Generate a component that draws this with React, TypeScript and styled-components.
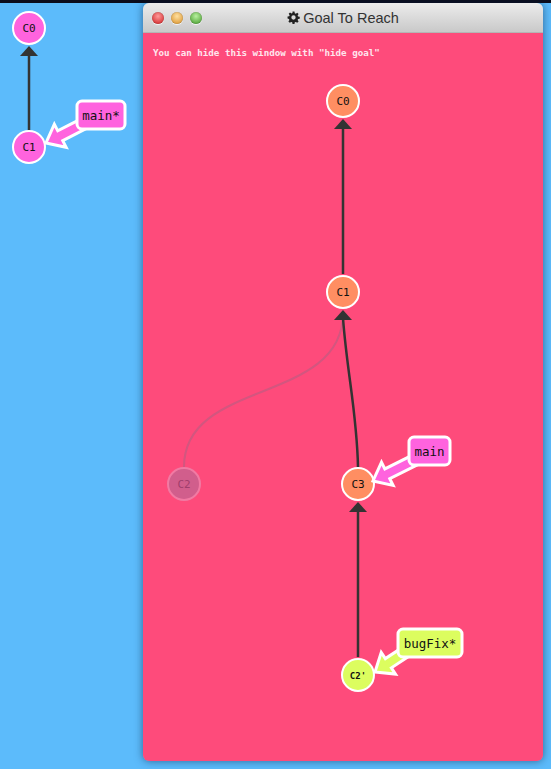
import styled, { createGlobalStyle } from 'styled-components';

const GlobalStyle = createGlobalStyle`
    html, body {
        margin: 0;
        padding: 0;
        background: #5cbbfb;
        overflow: hidden;
    }
`;

const Page = styled.div`
    width: 551px;
    height: 769px;
    background: #5cbbfb;
    border-top: 3px solid #0b0d1c;
    box-sizing: border-box;
    display: flex;
    align-items: flex-start;
`;
const LeftCanvas = styled.svg`
    width: 143px;
    height: 300px;
    flex: none;
`;
const Window = styled.div`
    width: 400px;
    height: 758px;
    border-radius: 6px;
    overflow: hidden;
    display: flex;
    flex-direction: column;
    box-shadow: 0 0 9px rgba(10, 30, 60, 0.55);
`;
const TitleBar = styled.div`
    height: 30px;
    flex: none;
    display: flex;
    align-items: center;
    justify-content: center;
    position: relative;
    background: linear-gradient(#ececec, #c9c9c9);
    border-bottom: 1px solid #b5b5b5;
    box-sizing: border-box;
`;
const Lights = styled.div`
    position: absolute;
    left: 9px;
    top: 9px;
    display: flex;
    gap: 7px;
`;
const Light = styled.span<{ $c: string; $d: string }>`
    width: 12px;
    height: 12px;
    border-radius: 50%;
    background: radial-gradient(circle at 50% 35%, ${p => p.$c} 0%, ${p => p.$d} 75%);
    box-shadow: 0 1px 1px rgba(255, 255, 255, 0.8), inset 0 0 1px rgba(0, 0, 0, 0.4);
`;
const Title = styled.div`
    font-family: 'Liberation Sans', Arial, sans-serif;
    font-size: 14.5px;
    color: #333;
    display: flex;
    align-items: center;
    gap: 3px;
`;
const Body = styled.div`
    flex: 1;
    background: #fe4b7b;
    display: flex;
    flex-direction: column;
`;
const Hint = styled.div`
    height: 26px;
    box-sizing: border-box;
    padding: 14px 10px 0;
    font-family: 'DejaVu Sans Mono', monospace;
    font-size: 9.2px;
    font-weight: bold;
    line-height: 12px;
    color: #ffe6ee;
    white-space: pre;
`;
const Graph = styled.svg`
    width: 400px;
    flex: 1;
`;

const ORANGE = '#ff8e62';
const PINK = '#ff63de';
const LIME = '#dcfd5f';
const EDGE = '#333';

function Node({ x, y, label, fill, small, faded }: {
    x: number; y: number; label: string; fill: string; small?: boolean; faded?: boolean;
}) {
    return (
        <g>
            <circle cx={x} cy={y} r={16} fill={faded ? '#d15e8c' : fill} stroke={faded ? '#f17aa3' : '#fff'} strokeWidth={2} />
            <text
                x={x}
                y={y + (small ? 3.5 : 4)}
                textAnchor="middle"
                fontFamily="'DejaVu Sans Mono', monospace"
                fontSize={small ? 9 : 11}
                fontWeight={small ? 'bold' : 'normal'}
                fill={faded ? '#a03e6c' : '#111'}
            >
                {label}
            </text>
        </g>
    );
}

function Head({ x, y }: { x: number; y: number }) {
    // arrowhead under a parent node, pointing up
    return <polygon points={`${x},${y} ${x - 9},${y + 10} ${x + 9},${y + 10}`} fill={EDGE} />;
}

function Branch({ x, y, w, text, tipX, tipY, color }: {
    x: number; y: number; w: number; text: string; tipX: number; tipY: number; color: string;
}) {
    const h = 28;
    const ax = x + 12;
    const ay = y + h - 8;
    const dx = ax - tipX;
    const dy = ay - tipY;
    const len = Math.sqrt(dx * dx + dy * dy);
    const ang = (Math.atan2(-dy, -dx) * 180) / Math.PI;
    const pts = `0,0 -16,-13 -16,-5.5 ${-len},-5.5 ${-len},5.5 -16,5.5 -16,13`;
    return (
        <g>
            <polygon
                points={pts}
                transform={`translate(${tipX} ${tipY}) rotate(${ang})`}
                fill={color}
                stroke="#fff"
                strokeWidth={3}
                strokeLinejoin="miter"
            />
            <rect x={x} y={y} width={w} height={h} rx={5} fill={color} stroke="#fff" strokeWidth={3} />
            <text
                x={x + w / 2}
                y={y + 18.5}
                textAnchor="middle"
                fontFamily="'DejaVu Sans Mono', monospace"
                fontSize={12.5}
                fill="#111"
            >
                {text}
            </text>
        </g>
    );
}

function Gear() {
    return (
        <svg width="13" height="13" viewBox="0 0 24 24">
            <path
                fill="#222"
                d="M10.2 1h3.6l.6 3.1 1.9.8 2.6-1.8 2.5 2.5-1.8 2.6.8 1.9 3.1.6v3.6l-3.1.6-.8 1.9 1.8 2.6-2.5 2.5-2.6-1.8-1.9.8-.6 3.1h-3.6l-.6-3.1-1.9-.8-2.6 1.8-2.5-2.5 1.8-2.6-.8-1.9L1 13.8v-3.6l3.1-.6.8-1.9-1.8-2.6 2.5-2.5 2.6 1.8 1.9-.8zM12 8a4 4 0 100 8 4 4 0 000-8z"
            />
        </svg>
    );
}

export default function App() {
    return (
        <>
            <GlobalStyle />
            <Page>
                <LeftCanvas viewBox="0 0 143 300">
                    <line x1={29} y1={128} x2={29} y2={50} stroke={EDGE} strokeWidth={2.5} />
                    <Head x={29} y={43} />
                    <Node x={29} y={25} label="C0" fill={PINK} />
                    <Node x={29} y={144} label="C1" fill={PINK} />
                    <Branch x={77} y={98} w={48} text="main*" tipX={46} tipY={140} color={PINK} />
                </LeftCanvas>
                <Window>
                    <TitleBar>
                        <Lights>
                            <Light $c="#ff9a9a" $d="#d8383a" />
                            <Light $c="#ffe0a0" $d="#e0a040" />
                            <Light $c="#b8f0a0" $d="#5aaa40" />
                        </Lights>
                        <Title>
                            <Gear />
                            Goal To Reach
                        </Title>
                    </TitleBar>
                    <Body>
                        <Hint>You can hide this window with "hide goal"</Hint>
                        <Graph viewBox="0 0 400 702" preserveAspectRatio="xMinYMin">
                            <g transform="translate(0 -26)">
                                <path
                                    d="M41 434 C41 345 200 372 200 280"
                                    fill="none"
                                    stroke="#d3567f"
                                    strokeWidth={2}
                                />
                                <line x1={200} y1={241} x2={200} y2={92} stroke={EDGE} strokeWidth={2.5} />
                                <Head x={200} y={86} />
                                <path
                                    d="M215 434 C214 380 204 340 200 285"
                                    fill="none"
                                    stroke={EDGE}
                                    strokeWidth={2.5}
                                />
                                <Head x={200} y={277} />
                                <line x1={215} y1={624} x2={215} y2={475} stroke={EDGE} strokeWidth={2.5} />
                                <Head x={215} y={469} />
                                <Node x={200} y={68} label="C0" fill={ORANGE} />
                                <Node x={200} y={259} label="C1" fill={ORANGE} />
                                <Node x={41} y={451} label="C2" fill={ORANGE} faded />
                                <Node x={215} y={451} label="C3" fill={ORANGE} />
                                <Node x={215} y={642} label="C2'" fill={LIME} small />
                                <Branch x={266} y={404} w={41} text="main" tipX={230} tipY={448} color={PINK} />
                                <Branch x={255} y={596} w={64} text="bugFix*" tipX={232} tipY={639} color={LIME} />
                            </g>
                        </Graph>
                    </Body>
                </Window>
            </Page>
        </>
    );
}
